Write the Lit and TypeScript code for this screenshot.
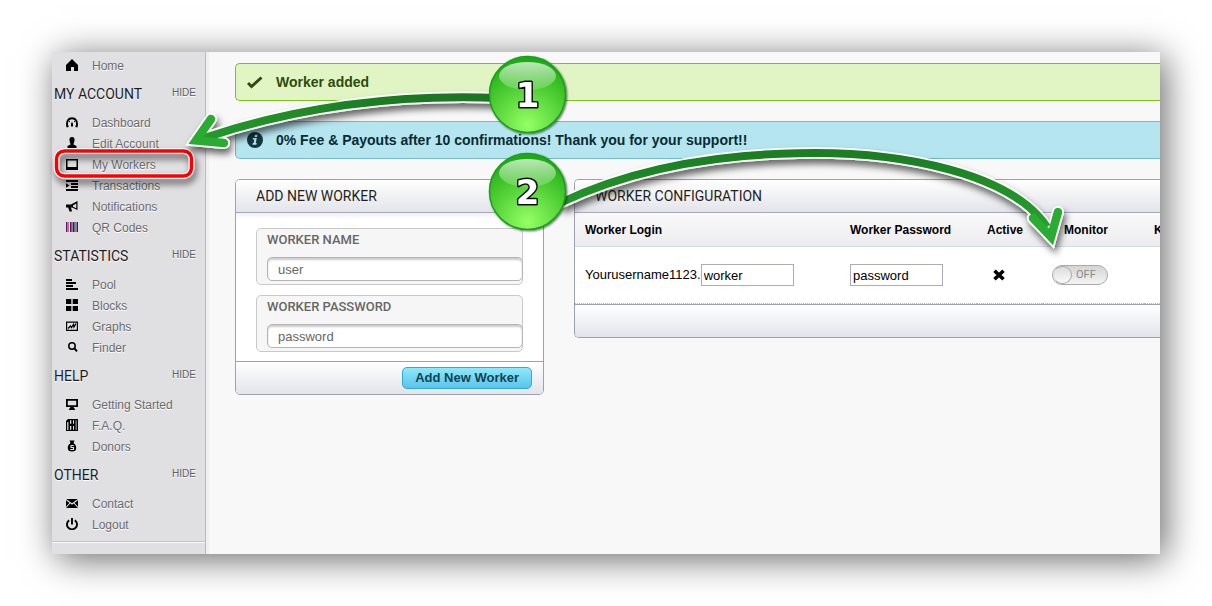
import { LitElement, html, css, svg } from "lit";
import { customElement } from "lit/decorators.js";

const icons: Record<string, unknown> = {
  home: svg`<path d="M6 0L12 6V12H8V8H5V12H0V6Z"/>`,
  gauge: svg`<path d="M2.500 10.200H1.200C0.300 5 2.500 2.200 6 2.200S11.700 5 10.800 10.200H9.500" fill="none" stroke="#000" stroke-width="1.900"/><path d="M5 10.500V8L6 5.500L7 8V10.500Z"/><path d="M3 5L4 6M9 5L8 6" stroke="#000"/>`,
  user: svg`<path d="M6 0C8.200 0 8.700 1.500 8.500 3.500C8.300 5.500 7.500 6 7.500 7.500L10.500 9V11H1.500V9L4.500 7.500C4.500 6 3.700 5.500 3.500 3.500C3.300 1.500 3.800 0 6 0Z"/>`,
  screen: svg`<path fill-rule="evenodd" d="M0 1H12V12H0ZM1.500 2.500V9H10.500V2.500Z"/>`,
  list: svg`<path d="M0 1H12V3H0ZM0 4.200L3.500 6.500L0 8.800ZM5 4H12V6H5ZM5 7H12V9H5ZM0 10H12V12H0Z"/>`,
  horn: svg`<path fill-rule="evenodd" d="M0 4.500H5L11.500 1V10L6 7.500H5L6 11.500H3.500L2.200 7.500H0ZM7 5.500V6.700L10.300 8.200V3.500Z"/>`,
  bars: svg`<path fill="#5e1767" d="M0 1H1.500V11H0ZM4 1H5V11H4Z"/><path fill="#b0738c" d="M2 1H3V11H2ZM6 1H7V11H6Z"/><path fill="#517e83" d="M5 1H6V11H5ZM8 1H9V11H8Z"/><path fill="#3e1b50" d="M7 1H8V11H7ZM9.500 1H10.500V11H9.500ZM11 1H12V11H11Z"/>`,
  lines: svg`<path d="M0 1H6V3H0ZM0 4H10V6H0ZM0 7H7V9H0ZM0 10H12V12H0Z"/>`,
  grid: svg`<path d="M0 0H5.300V5H0ZM6.700 0H12V5H6.700ZM0 7H5.300V12H0ZM6.700 7H12V12H6.700Z"/>`,
  graph: svg`<path fill-rule="evenodd" d="M0 1.500H12V11H0ZM1.200 2.700V9.800H10.800V2.700Z"/><path d="M2 8.500L4.500 6L5.500 7.500L7.500 4.500L8 7L10 3.500" fill="none" stroke="#000" stroke-width="1.300"/>`,
  find: svg`<circle cx="6" cy="5" r="3.200" fill="none" stroke="#000" stroke-width="1.500"/><path d="M8.200 7.200L11 10.300" stroke="#000" stroke-width="2"/>`,
  monitor: svg`<path fill-rule="evenodd" d="M0 1H12V9H7.500L8 10.500H9V12H3V10.500H4L4.500 9H0ZM1.800 2.700V7.300H10.200V2.700Z"/>`,
  book: svg`<path fill-rule="evenodd" d="M2 0H12V12H0V2ZM1.200 3V11H2.400V3ZM4 1.200V4.800H5.300V1.200ZM7 1.200V4.800H8V1.200ZM9.700 1.200V11H10.500V1.200ZM4 7V10.800H5.300V7ZM7 7V10.800H8V7Z"/>`,
  bag: svg`<path d="M3.500 0.500H8.500L7.500 3C9.500 4.500 10.200 6 10.200 8C10.200 10.700 8.700 11.500 6 11.500S1.800 10.700 1.800 8C1.800 6 2.500 4.500 4.500 3Z"/><path d="M7.800 5.500H5V7.500H7.500V9.500H4.200" fill="none" stroke="#e0e0e3" stroke-width="1.100"/>`,
  mail: svg`<path d="M0 2H12V11H0Z"/><path d="M0 2.500L6 7L12 2.500M0 10.500L4 6M12 10.500L8 6" fill="none" stroke="#e0e0e3" stroke-width="1.100"/>`,
  power: svg`<path d="M3.200 2.200A5 5 0 1 0 8.800 2.200M6 0V6.500" fill="none" stroke="#000" stroke-width="1.900"/>`,
  check: svg`<path d="M1 9L4.500 12.500L14.500 3.500" fill="none" stroke="#2f4a0c" stroke-width="3"/>`,
  info: svg`<circle cx="8" cy="8" r="8" fill="#14363f"/><path d="M8 2.800H10.500L10 5H7.600ZM6 6H9.800L8.700 11H9.700L9.400 12.800H5.400L5.800 11H6.700L7.300 7.600H5.700Z" fill="#b5e5ef"/>`,
  cross: svg`<path d="M1.500 1.800L10.500 10.200M10.500 1.800L1.500 10.200" stroke="#000" stroke-width="3.600"/>`,
};

const icon = (name: string, size = 12) =>
  html`<svg class="icon" width=${size} height=${size} viewBox="0 0 ${size} ${size}" aria-hidden="true">${icons[name]}</svg>`;

const sections = [
  { title: "MY ACCOUNT", items: [["gauge", "Dashboard"], ["user", "Edit Account"], ["screen", "My Workers"], ["list", "Transactions"], ["horn", "Notifications"], ["bars", "QR Codes"]] },
  { title: "STATISTICS", items: [["lines", "Pool"], ["grid", "Blocks"], ["graph", "Graphs"], ["find", "Finder"]] },
  { title: "HELP", items: [["monitor", "Getting Started"], ["book", "F.A.Q."], ["bag", "Donors"]] },
  { title: "OTHER", items: [["mail", "Contact"], ["power", "Logout"]] },
];

@customElement("side-menu")
class SideMenu extends LitElement {
  static styles = css`
    :host { display: block; box-sizing: border-box; width: 157px; flex: none; padding-top: 3px; background: #e0e0e3;
      border-right: 3px solid #efeff0; box-shadow: inset -1px 0 #bcbcc0; font: 12px/23px "Liberation Sans", Arial, sans-serif; }
    ul { list-style: none; margin: 0; padding: 0; }
    .link { display: flex; align-items: center; gap: 14px; height: 21px; padding-left: 14px; color: #6a6a6c; text-decoration: none; text-shadow: 0 1px #fff; }
    .link span { padding-top: 1px; }
    .icon { fill: #000; flex: none; margin-bottom: 1px; }
    .head { display: flex; align-items: center; justify-content: space-between; height: 36px; padding: 0 10px 0 2px; }
    .title { margin: 0; font: 14px/20px Roboto, "Liberation Sans", sans-serif; color: #1c1c1e; text-shadow: 0 1px #fff; }
    .hide { border: 0; padding: 0 0 3px; background: none; font: 10px/12px "Liberation Sans", Arial, sans-serif; color: #5c5c5f; text-shadow: 0 1px #fff; }
    .rule { border: 0; border-top: 1px solid #c4c4c7; border-bottom: 1px solid #fafafa; margin: 6px 1px 0 0; }
  `;
  item(name: string, label: string) {
    return html`<li><a class="link" href="#">${icon(name)}<span>${label}</span></a></li>`;
  }
  render() {
    return html`<nav>
      <ul>${this.item("home", "Home")}</ul>
      ${sections.map((s) => html`<section>
        <div class="head"><h3 class="title">${s.title}</h3><button class="hide" type="button">HIDE</button></div>
        <ul>${s.items.map(([n, l]) => this.item(n, l))}</ul>
      </section>`)}
      <hr class="rule" />
    </nav>`;
  }
}

@customElement("tutorial-marks")
class TutorialMarks extends LitElement {
  static styles = css`
    :host { position: absolute; top: 0; left: 0; pointer-events: none; }
    svg { display: block; }
    .line { fill: none; }
    .number { font: bold 34px "DejaVu Sans", sans-serif; fill: #fff; stroke: #111; stroke-width: 3px; stroke-linejoin: round; paint-order: stroke; text-anchor: middle; }
  `;
  arrow(curve: string, head: string, paint: string) {
    return svg`<g filter="url(#drop)" class="line">
      <path d=${curve} stroke="#fff" stroke-width="11.500"/>
      <path d=${head} stroke="#fff" stroke-width="12" stroke-linecap="round"/>
      <path d=${curve} stroke=${paint} stroke-width="8"/>
      <path d=${head} stroke="#2bac33" stroke-width="8.500" stroke-linecap="round"/>
    </g>`;
  }
  badge(y: number, n: string) {
    return svg`<g transform="translate(527.500 ${y})" filter="url(#soft)">
      <circle r="38" fill="url(#ball)" stroke="#1f9d1c" stroke-width="1.500"/>
      <ellipse cy="-18.500" rx="28.500" ry="14" fill="url(#gloss)"/>
      <text class="number" y="12">${n}</text>
    </g>`;
  }
  render() {
    return html`<svg width="1212" height="606" viewBox="0 0 1212 606">
      <defs>
        <filter id="drop" x="-20%" y="-40%" width="140%" height="200%"><feDropShadow dx="2" dy="5" stdDeviation="3.500" flood-opacity="0.600"/></filter>
        <filter id="soft" x="-20%" y="-20%" width="140%" height="140%"><feDropShadow dx="1" dy="1" stdDeviation="1" flood-opacity="0.600"/></filter>
        <radialGradient id="ball" cx="0.500" cy="0.900" r="0.850">
          <stop offset="0" stop-color="#95ff66"/><stop offset="0.450" stop-color="#5fdb40"/><stop offset="0.850" stop-color="#32bb20"/><stop offset="1" stop-color="#1bab13"/>
        </radialGradient>
        <linearGradient id="gloss" x1="0" y1="0" x2="0" y2="1"><stop offset="0" stop-color="#fff" stop-opacity="0.700"/><stop offset="1" stop-color="#fff" stop-opacity="0.150"/></linearGradient>
        <linearGradient id="first" gradientUnits="userSpaceOnUse" x1="420" y1="0" x2="200" y2="0"><stop offset="0" stop-color="#1b7622"/><stop offset="1" stop-color="#259a2b"/></linearGradient>
        <linearGradient id="second" gradientUnits="userSpaceOnUse" x1="0" y1="155" x2="0" y2="225"><stop offset="0" stop-color="#1c7d24"/><stop offset="1" stop-color="#27a02e"/></linearGradient>
      </defs>
      <g filter="url(#drop)" fill="none">
        <rect x="56.500" y="151" width="135" height="25" rx="8" stroke="#fff" stroke-width="5.500"/>
        <rect x="56.500" y="151" width="135" height="25" rx="8" stroke="#fb0000" stroke-width="3.500"/>
      </g>
      ${this.arrow("M500 98C400 94 300 106 204 138", "M211 119L196 140.500L224 143", "url(#first)")}
      ${this.arrow("M560 203C640 165 730 153 815 153C900 153 1010 172 1047 227", "M1033 218L1051 237L1058 212", "url(#second)")}
      ${this.badge(94.5, "1")}${this.badge(191.5, "2")}
    </svg>`;
  }
}

@customElement("app-root")
class AppRoot extends LitElement {
  static styles = css`
    :host { display: flex; position: relative; box-sizing: border-box; min-height: 100vh; padding: 52px; background: #fff; overflow: hidden;
      font: 13px/16px "Liberation Sans", Arial, sans-serif; color: #000; }
    .window { display: flex; flex: 1; min-width: 0; background: #f8f8f8; box-shadow: 5px 5px 34px rgba(0, 0, 0, 0.600); }
    .content { flex: 1; min-width: 0; overflow: hidden; padding: 11px 0 20px 26px; display: flex; flex-direction: column; gap: 20px; }
    .alert { display: flex; align-items: center; gap: 13px; height: 36px; padding-left: 11px; border: 1px solid; border-right: 0; border-radius: 5px 0 0 5px; font-weight: bold; font-size: 14px; }
    .success { background: #e1f5c4; border-color: #7cc11c; color: #2f4a0c; }
    .notice { background: #b5e5ef; border-color: #74b9cd; color: #0b2a33; }
    .row { display: flex; align-items: flex-start; gap: 30px; }
    .panel { background: #fff; border: 1px solid #9ca1b2; border-radius: 5px; overflow: hidden; }
    .add { width: 307px; flex: none; }
    .config { flex: 1; min-width: 0; border-right: 0; border-radius: 5px 0 0 5px; }
    .bar { margin: 0; height: 32px; padding-left: 20px; border-bottom: 1px solid #a4a9ba; background: linear-gradient(#fff, #e3e4ea); font: 14px/32px Roboto, "Liberation Sans", sans-serif; color: #1f1f20; }
    .fields { display: flex; flex-direction: column; gap: 10px; padding: 15px 20px 9px; background: linear-gradient(#f0f0f4, #fff 6px); }
    .field { display: flex; flex-direction: column; gap: 9px; padding: 3px 0 3px 10px; border: 1px solid #c9c9c9; border-radius: 5px; background: #f6f6f6; }
    .label { font: 500 13px/16px Roboto, "Liberation Sans", sans-serif; color: #666; }
    .text { box-sizing: border-box; height: 24px; margin-right: -1px; padding: 0 10px; border: 1px solid #b5b5b5; border-radius: 5px; background: #fff; box-shadow: inset 0 2px 2px #ccc; font: inherit; color: #666; }
    .foot { height: 32px; border-top: 1px solid #9ca1b2; background: linear-gradient(#fff, #e3e4ea); display: flex; align-items: center; justify-content: flex-end; padding-right: 11px; }
    .submit { height: 22px; padding: 0 12px; border: 1px solid #30adcd; border-radius: 5px; background: linear-gradient(#8ee9fa, #5cc3ec); color: #104453; font: bold 13px/20px "Liberation Sans", Arial, sans-serif; }
    .grid { width: 100%; min-width: 585px; table-layout: fixed; border-collapse: separate; border-spacing: 0; }
    .c-login { width: 265px; } .c-pass { width: 137px; } .c-active { width: 65px; } .c-monitor { width: 102px; }
    th { height: 34px; padding: 0 0 0 10px; text-align: left; font-size: 12px; background: linear-gradient(#fafafb, #ececee); border-bottom: 1px solid #d5dae5; box-sizing: border-box; }
    td { height: 56px; padding: 0 0 0 10px; border-bottom: 1px dotted #bbb; }
    th.monitor { padding-left: 22px; }
    td.active { padding-left: 16px; }
    td .icon { display: block; }
    .login { display: flex; align-items: center; }
    .cell { box-sizing: border-box; width: 93px; height: 22px; padding: 0 2px; border: 1px solid #abadb3; background: #fff; font: inherit; color: #000; }
    .toggle { box-sizing: border-box; display: flex; align-items: center; gap: 4px; width: 56px; height: 20px; padding: 0; border: 1px solid #aaa; border-radius: 10px; background: linear-gradient(#d4d4d4, #f4f4f4); color: #8a8a8a; font: 11px/18px Roboto, sans-serif; }
    .knob { box-sizing: border-box; width: 19px; height: 18px; border: 1px solid #aaa; border-left-color: #ddd; border-radius: 50%; background: linear-gradient(#dcdcdc, #fafafa); }
  `;
  render() {
    return html`
      <div class="window">
        <side-menu></side-menu>
        <main class="content">
          <div class="alert success">${icon("check", 16)}<span>Worker added</span></div>
          <div class="alert notice">${icon("info", 16)}<span>0% Fee &amp; Payouts after 10 confirmations! Thank you for your support!!</span></div>
          <div class="row">
            <form class="panel add">
              <h2 class="bar">ADD NEW WORKER</h2>
              <div class="fields">
                <div class="field"><label class="label" for="name">WORKER NAME</label><input class="text" id="name" value="user" /></div>
                <div class="field"><label class="label" for="pass">WORKER PASSWORD</label><input class="text" id="pass" value="password" /></div>
              </div>
              <div class="foot"><button class="submit" type="button">Add New Worker</button></div>
            </form>
            <section class="panel config">
              <h2 class="bar">WORKER CONFIGURATION</h2>
              <table class="grid">
                <thead><tr><th class="c-login">Worker Login</th><th class="c-pass">Worker Password</th><th class="c-active">Active</th><th class="c-monitor monitor">Monitor</th><th>K</th></tr></thead>
                <tbody><tr>
                  <td><label class="login"><span>Yourusername1123.</span><input class="cell" value="worker" /></label></td>
                  <td><input class="cell" aria-label="Worker Password" value="password" /></td>
                  <td class="active">${icon("cross")}</td>
                  <td><button class="toggle" type="button" role="switch" aria-checked="false" aria-label="Monitor"><span class="knob"></span>OFF</button></td>
                  <td></td>
                </tr></tbody>
              </table>
              <div class="foot"></div>
            </section>
          </div>
        </main>
      </div>
      <tutorial-marks></tutorial-marks>
    `;
  }
}
